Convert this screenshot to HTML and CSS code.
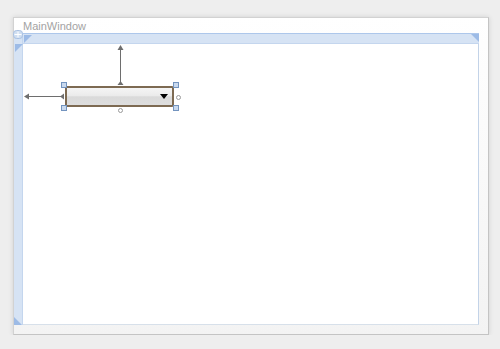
FILE: index.html
```html
<!DOCTYPE html>
<html lang="en">

<head>
    <meta charset="UTF-8">
    <title>MainWindow</title>
    <link rel="stylesheet" href="styles.css">
</head>

<body>
    <div class="window">
        <div class="title">MainWindow</div>
        <div class="surface">
            <div class="strip">
                <span class="tri tri-tl"></span>
                <span class="tri tri-bl"></span>
            </div>
            <div class="main">
                <div class="band">
                    <span class="tri tri-tl"></span>
                    <span class="tri tri-tr"></span>
                </div>
                <div class="content">
                    <!-- margin arrows -->
                    <svg class="arrows" width="200" height="80" viewBox="0 0 200 80">
                        <line x1="97.5" y1="3" x2="97.5" y2="39" stroke="#6e6e6e" stroke-width="1"/>
                        <polygon points="97.5,1 94.5,6 100.5,6" fill="#6e6e6e"/>
                        <polygon points="97.5,37 94.5,41 100.5,41" fill="#6e6e6e"/>
                        <line x1="3" y1="52.5" x2="39" y2="52.5" stroke="#6e6e6e" stroke-width="1"/>
                        <polygon points="1,52.5 6,49.5 6,55.5" fill="#6e6e6e"/>
                        <polygon points="37,52.5 41,49.5 41,55.5" fill="#6e6e6e"/>
                    </svg>
                    <div class="combo">
                        <span class="drop"></span>
                    </div>
                    <span class="handle h-tl"></span>
                    <span class="handle h-tr"></span>
                    <span class="handle h-bl"></span>
                    <span class="handle h-br"></span>
                    <span class="dot dot-r"></span>
                    <span class="dot dot-b"></span>
                </div>
            </div>
        </div>
        <svg class="grid-adorner" width="10" height="9" viewBox="0 0 10 9">
            <rect x="0.5" y="0.5" width="9" height="8" rx="3" fill="#cfdef1" stroke="#a9c1e2"/>
            <line x1="5" y1="1.5" x2="5" y2="7.5" stroke="#ffffff"/>
            <line x1="1.5" y1="4.5" x2="8.5" y2="4.5" stroke="#ffffff"/>
        </svg>
    </div>
</body>

</html>
```

FILE: styles.css
```css
body {
    margin: 0;
    padding: 17px 0 0 13px;
    background: #eeeeee;
    font-family: "Segoe UI", "Liberation Sans", "Open Sans", sans-serif;
}

.window {
    position: relative;
    width: 474px;
    height: 316px;
    border: 1px solid #d2d2d2;
    border-right-color: #c4c4c4;
    border-bottom-color: #c4c4c4;
    background: linear-gradient(#ffffff, #f3f3f3);
    box-shadow: 0 0 5px rgba(0, 0, 0, 0.12);
    display: flex;
    flex-direction: column;
}

.title {
    height: 15px;
    padding-left: 9px;
    font-size: 11px;
    line-height: 16px;
    color: #a3a3a3;
}

.surface {
    display: flex;
    height: 292px;
    margin-right: 9px;
}

.strip {
    position: relative;
    width: 8px;
    background: #d6e3f4;
    border-right: 1px solid #c4d6ee;
}

.main {
    flex: 1;
    display: flex;
    flex-direction: column;
}

.band {
    position: relative;
    height: 9px;
    background: #d6e3f4;
    border-top: 1px solid #adc7eb;
    border-bottom: 1px solid #c4d6ee;
}

.content {
    position: relative;
    flex: 1;
    background: #ffffff;
    border-right: 1px solid #c3d3e8;
    border-bottom: 1px solid #d7e0ea;
}

/* corner markers */
.tri {
    position: absolute;
    width: 0;
    height: 0;
    border: 4px solid transparent;
}

.strip .tri-tl {
    top: 11px;
    left: 1px;
    border-top-color: #9dbbe6;
    border-left-color: #9dbbe6;
}

.strip .tri-bl {
    bottom: 0;
    left: 0;
    border-bottom-color: #9dbbe6;
    border-left-color: #9dbbe6;
}

.band .tri-tl {
    top: 1px;
    left: 1px;
    border-top-color: #9dbbe6;
    border-left-color: #9dbbe6;
}

.band .tri-tr {
    top: 0;
    right: 0;
    border-top-color: #9dbbe6;
    border-right-color: #9dbbe6;
}

.grid-adorner {
    position: absolute;
    left: -1px;
    top: 12px;
}

/* designer canvas */
.arrows {
    position: absolute;
    left: 0;
    top: 0;
}

.combo {
    position: absolute;
    left: 42px;
    top: 42px;
    width: 105px;
    height: 17px;
    border: 2px solid #7d6a52;
    border-radius: 2px;
    background: linear-gradient(#f5f5f5 0%, #ebebeb 45%, #dadada 52%, #dedede 100%);
}

.drop {
    position: absolute;
    right: 4px;
    top: 6px;
    width: 0;
    height: 0;
    border-left: 4px solid transparent;
    border-right: 4px solid transparent;
    border-top: 5px solid #000000;
}

.handle {
    position: absolute;
    width: 4px;
    height: 4px;
    background: #c9d9ee;
    border: 1px solid #7394bf;
}

.h-tl { left: 38px; top: 38px; }
.h-tr { left: 150px; top: 38px; }
.h-bl { left: 38px; top: 61px; }
.h-br { left: 150px; top: 61px; }

.dot {
    position: absolute;
    width: 3px;
    height: 3px;
    border: 1px solid #9a9a9a;
    border-radius: 50%;
    background: #ffffff;
}

.dot-r { left: 153px; top: 51px; }
.dot-b { left: 95px; top: 64px; }
```
